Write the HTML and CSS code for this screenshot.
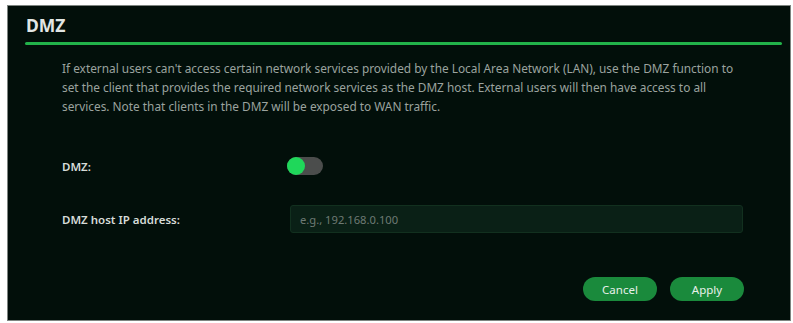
FILE: index.html
```html
<!DOCTYPE html>
<html>
<head>
<meta charset="utf-8">
<link rel="stylesheet" href="styles.css">
</head>
<body>
<div class="panel">
  <div class="header">
    <h1 class="title">DMZ</h1>
    <div class="rule"></div>
  </div>
  <p class="desc">If external users can't access certain network services provided by the Local Area Network (LAN), use the DMZ function to set the client that provides the required network services as the DMZ host. External users will then have access to all services. Note that clients in the DMZ will be exposed to WAN traffic.</p>
  <div class="row row-toggle">
    <span class="label">DMZ:</span>
    <span class="toggle"><span class="knob"></span></span>
  </div>
  <div class="row row-input">
    <span class="label">DMZ host IP address:</span>
    <input class="field" type="text" placeholder="e.g., 192.168.0.100">
  </div>
  <div class="actions">
    <button class="btn">Cancel</button>
    <button class="btn">Apply</button>
  </div>
</div>
</body>
</html>
```

FILE: styles.css
```css
html, body {
  margin: 0;
  padding: 0;
  background: #ffffff;
}
body {
  width: 793px;
  height: 323px;
  overflow: hidden;
  font-family: "Noto Sans", "Open Sans", sans-serif;
}
.panel {
  box-sizing: border-box;
  margin: 5px 0 0 7px;
  width: 784px;
  height: 316px;
  background: #020f0a;
  border: 1px solid #7d8480;
  display: flex;
  flex-direction: column;
}
.header {
  padding: 0 8px 0 17px;
}
.title {
  margin: 9px 0 0 1px;
  font-size: 17.5px;
  line-height: 20px;
  font-weight: 700;
  color: #e2e6e4;
}
.rule {
  margin-top: 7px;
  height: 3px;
  border-radius: 2px;
  background: #22b24a;
}
.desc {
  margin: 14px 0 0 54px;
  width: 684px;
  font-size: 11.85px;
  line-height: 19px;
  color: #9ba39f;
}
.row {
  display: flex;
  align-items: center;
  padding-left: 54px;
}
.row-toggle {
  margin-top: 41px;
  height: 18px;
}
.row-input {
  margin-top: 30px;
  height: 28px;
}
.label {
  font-size: 11.5px;
  font-weight: 600;
  color: #d6dbd8;
}
.row-toggle .label {
  width: 225px;
}
.row-input .label {
  width: 228px;
}
.toggle {
  width: 36px;
  height: 18px;
  border-radius: 9px;
  background: #4b4d4c;
  position: relative;
}
.knob {
  position: absolute;
  left: 0;
  top: 0;
  width: 18px;
  height: 18px;
  border-radius: 50%;
  background: #1fd75a;
}
.field {
  box-sizing: border-box;
  width: 453px;
  height: 28px;
  padding: 0 9px;
  background: #0a2016;
  border: 1px solid #12301f;
  border-radius: 3px;
  color: #cfd5d2;
  font-family: inherit;
  font-size: 11.2px;
  outline: none;
}
.field::placeholder {
  color: #6e7a74;
}
.actions {
  display: flex;
  justify-content: flex-end;
  gap: 13px;
  margin-top: 44px;
  padding-right: 46px;
}
.btn {
  width: 74px;
  height: 24px;
  border: none;
  border-radius: 12px;
  background: #1a8a3c;
  color: #e8f0eb;
  font-family: inherit;
  font-size: 11.5px;
  padding: 0;
}
```
